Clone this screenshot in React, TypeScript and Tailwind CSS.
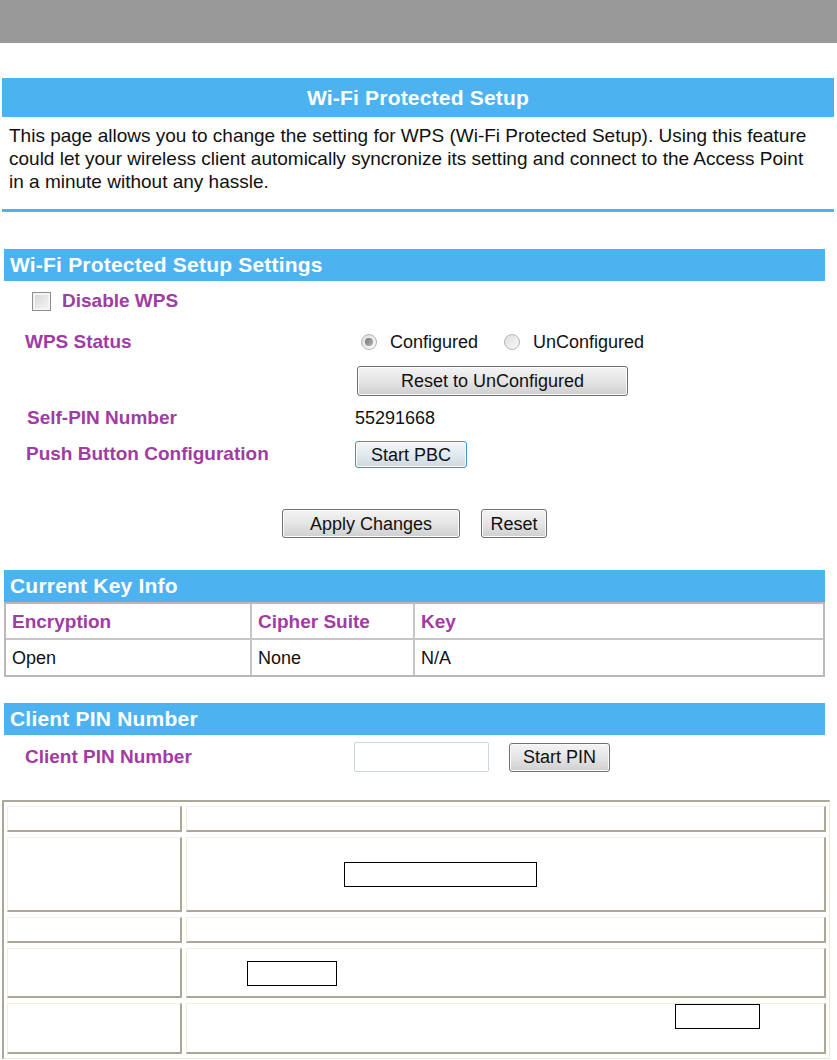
import React from 'react';

const purple = 'text-[#a03ca3]';

const btnBase =
  'flex items-center justify-center rounded-[3px] border text-[18px] leading-none text-[#111] bg-linear-to-b shadow-[inset_0_0_0_1px_#fbfbfb]';
const btnGray = 'border-[#707070] from-[#f4f4f4] via-[#e5e5e5] to-[#cfcfcf]';
const btnBlue = 'border-[#3c93d4] from-[#f1f7fb] via-[#e2eaf0] to-[#cdd8e0]';

const cell =
  'bg-white border-t border-l border-t-[#f1efe2] border-l-[#f1efe2] border-r-2 border-b-2 border-r-[#aca899] border-b-[#aca899]';

const SectionBar = ({ title }: { title: string }) => (
  <div className="mx-[4px] flex h-[32px] w-[821px] items-center bg-[#4cb3f0] pl-[6px] text-[21px] font-bold tracking-[0.2px] text-white">
    {title}
  </div>
);

const Radio = ({ checked }: { checked?: boolean }) => (
  <span className="flex h-[16px] w-[16px] shrink-0 items-center justify-center rounded-full border border-[#b5b5b5] bg-linear-to-br from-[#dedede] to-[#fafafa]">
    {checked && <span className="h-[8px] w-[8px] rounded-full bg-linear-to-br from-[#767676] to-[#b4b4b4]" />}
  </span>
);

const App: React.FC = () => {
  return (
    <div className="min-h-[1060px] w-[837px] bg-white font-['Liberation_Sans',Arial,sans-serif] text-[#111]">
      <div className="h-[43px] bg-[#999999]" />

      {/* page title */}
      <div className="ml-[2px] mt-[35px] flex h-[39px] w-[832px] items-center justify-center bg-[#4cb3f0] text-[21px] font-bold tracking-[0.2px] text-white">
        Wi-Fi Protected Setup
      </div>
      <p className="w-[819px] pl-[9px] pt-[7px] text-[19px] leading-[23px]">
        This page allows you to change the setting for WPS (Wi-Fi Protected Setup). Using this feature could let your
        wireless client automically syncronize its setting and connect to the Access Point in a minute without any
        hassle.
      </p>
      <div className="ml-[2px] mt-[16px] h-[3px] w-[832px] bg-[#4cb3f0]" />

      {/* settings */}
      <div className="mt-[37px]">
        <SectionBar title="Wi-Fi Protected Setup Settings" />
      </div>
      <div className="flex h-[40px] items-center pl-[32px]">
        <span className="h-[19px] w-[19px] border border-[#8e8f8f] bg-linear-to-br from-[#d6d6d6] to-[#f6f6f6] shadow-[inset_0_0_0_2px_#f4f4f4]" />
        <span className={`ml-[11px] text-[19px] font-bold ${purple}`}>Disable WPS</span>
      </div>
      <div className="mt-[1px] flex h-[40px] items-center">
        <span className={`ml-[25px] w-[330px] text-[19px] font-bold ${purple}`}>WPS Status</span>
        <div className="flex items-center text-[18px]">
          <span className="ml-[6px]">
            <Radio checked />
          </span>
          <span className="ml-[13px]">Configured</span>
          <span className="ml-[26px]">
            <Radio />
          </span>
          <span className="ml-[13px]">UnConfigured</span>
        </div>
      </div>
      <div className="mt-[4px] pl-[357px]">
        <button className={`${btnBase} ${btnGray} h-[30px] w-[271px]`}>Reset to UnConfigured</button>
      </div>
      <div className="flex h-[44px] items-center">
        <span className={`ml-[27px] w-[328px] text-[19px] font-bold ${purple}`}>Self-PIN Number</span>
        <span className="text-[18px]">55291668</span>
      </div>
      <div className="flex h-[29px] items-center">
        <span className={`ml-[26px] w-[329px] text-[19px] font-bold ${purple}`}>Push Button Configuration</span>
        <button className={`${btnBase} ${btnBlue} h-[27px] w-[112px]`}>Start PBC</button>
      </div>
      <div className="mx-[4px] mt-[40px] flex w-[821px] justify-center gap-[21px]">
        <button className={`${btnBase} ${btnGray} h-[29px] w-[178px]`}>Apply Changes</button>
        <button className={`${btnBase} ${btnGray} h-[29px] w-[66px]`}>Reset</button>
      </div>

      {/* current key info */}
      <div className="mt-[32px]">
        <SectionBar title="Current Key Info" />
      </div>
      <div className="mx-[4px] w-[821px] border-2 border-[#b9b9b9]">
        <div className="flex h-[36px] border-b-2 border-[#c6c6c6] text-[19px] font-bold">
          <div className={`flex w-[246px] items-center border-r-2 border-[#c6c6c6] pl-[6px] pt-[3px] ${purple}`}>Encryption</div>
          <div className={`flex w-[163px] items-center border-r-2 border-[#c6c6c6] pl-[6px] pt-[3px] ${purple}`}>Cipher Suite</div>
          <div className={`flex flex-1 items-center pl-[6px] pt-[3px] ${purple}`}>Key</div>
        </div>
        <div className="flex h-[35px] text-[18px]">
          <div className="flex w-[246px] items-center border-r-2 border-[#c6c6c6] pl-[6px] pt-[1px]">Open</div>
          <div className="flex w-[163px] items-center border-r-2 border-[#c6c6c6] pl-[6px] pt-[1px]">None</div>
          <div className="flex flex-1 items-center pl-[6px] pt-[1px]">N/A</div>
        </div>
      </div>

      {/* client pin */}
      <div className="mt-[26px]">
        <SectionBar title="Client PIN Number" />
      </div>
      <div className="mt-[7px] flex h-[30px] items-center">
        <span className={`ml-[25px] w-[329px] text-[19px] font-bold ${purple}`}>Client PIN Number</span>
        <input className="h-[30px] w-[135px] rounded-[2px] border border-[#cdd5dd] bg-white px-1 text-[18px] outline-none" />
        <button className={`${btnBase} ${btnGray} ml-[20px] h-[29px] w-[101px]`}>Start PIN</button>
      </div>

      {/* status table */}
      <div className="ml-[2px] mt-[28px] w-[828px] border-b border-l-2 border-r border-t-2 border-b-[#ece9d8] border-l-[#aca899] border-r-[#ece9d8] border-t-[#aca899] pb-[4px] pl-[3px] pr-[3px] pt-[4px]">
        <div className="grid grid-cols-[175px_640px] gap-x-[4px] gap-y-[5px]">
          <div className={`${cell} h-[26px]`} />
          <div className={`${cell} h-[26px]`} />

          <div className={`${cell} h-[75px]`} />
          <div className={`${cell} h-[75px]`}>
            <div className="ml-[157px] mt-[24px] h-[25px] w-[193px] border border-black" />
          </div>

          <div className={`${cell} h-[26px]`} />
          <div className={`${cell} h-[26px]`} />

          <div className={`${cell} h-[50px]`} />
          <div className={`${cell} h-[50px]`}>
            <div className="ml-[60px] mt-[12px] h-[25px] w-[90px] border border-black" />
          </div>

          <div className={`${cell} h-[51px]`} />
          <div className={`${cell} h-[51px]`}>
            <div className="ml-[488px] h-[25px] w-[85px] border border-black" />
          </div>
        </div>
      </div>
    </div>
  );
};

export default App;
